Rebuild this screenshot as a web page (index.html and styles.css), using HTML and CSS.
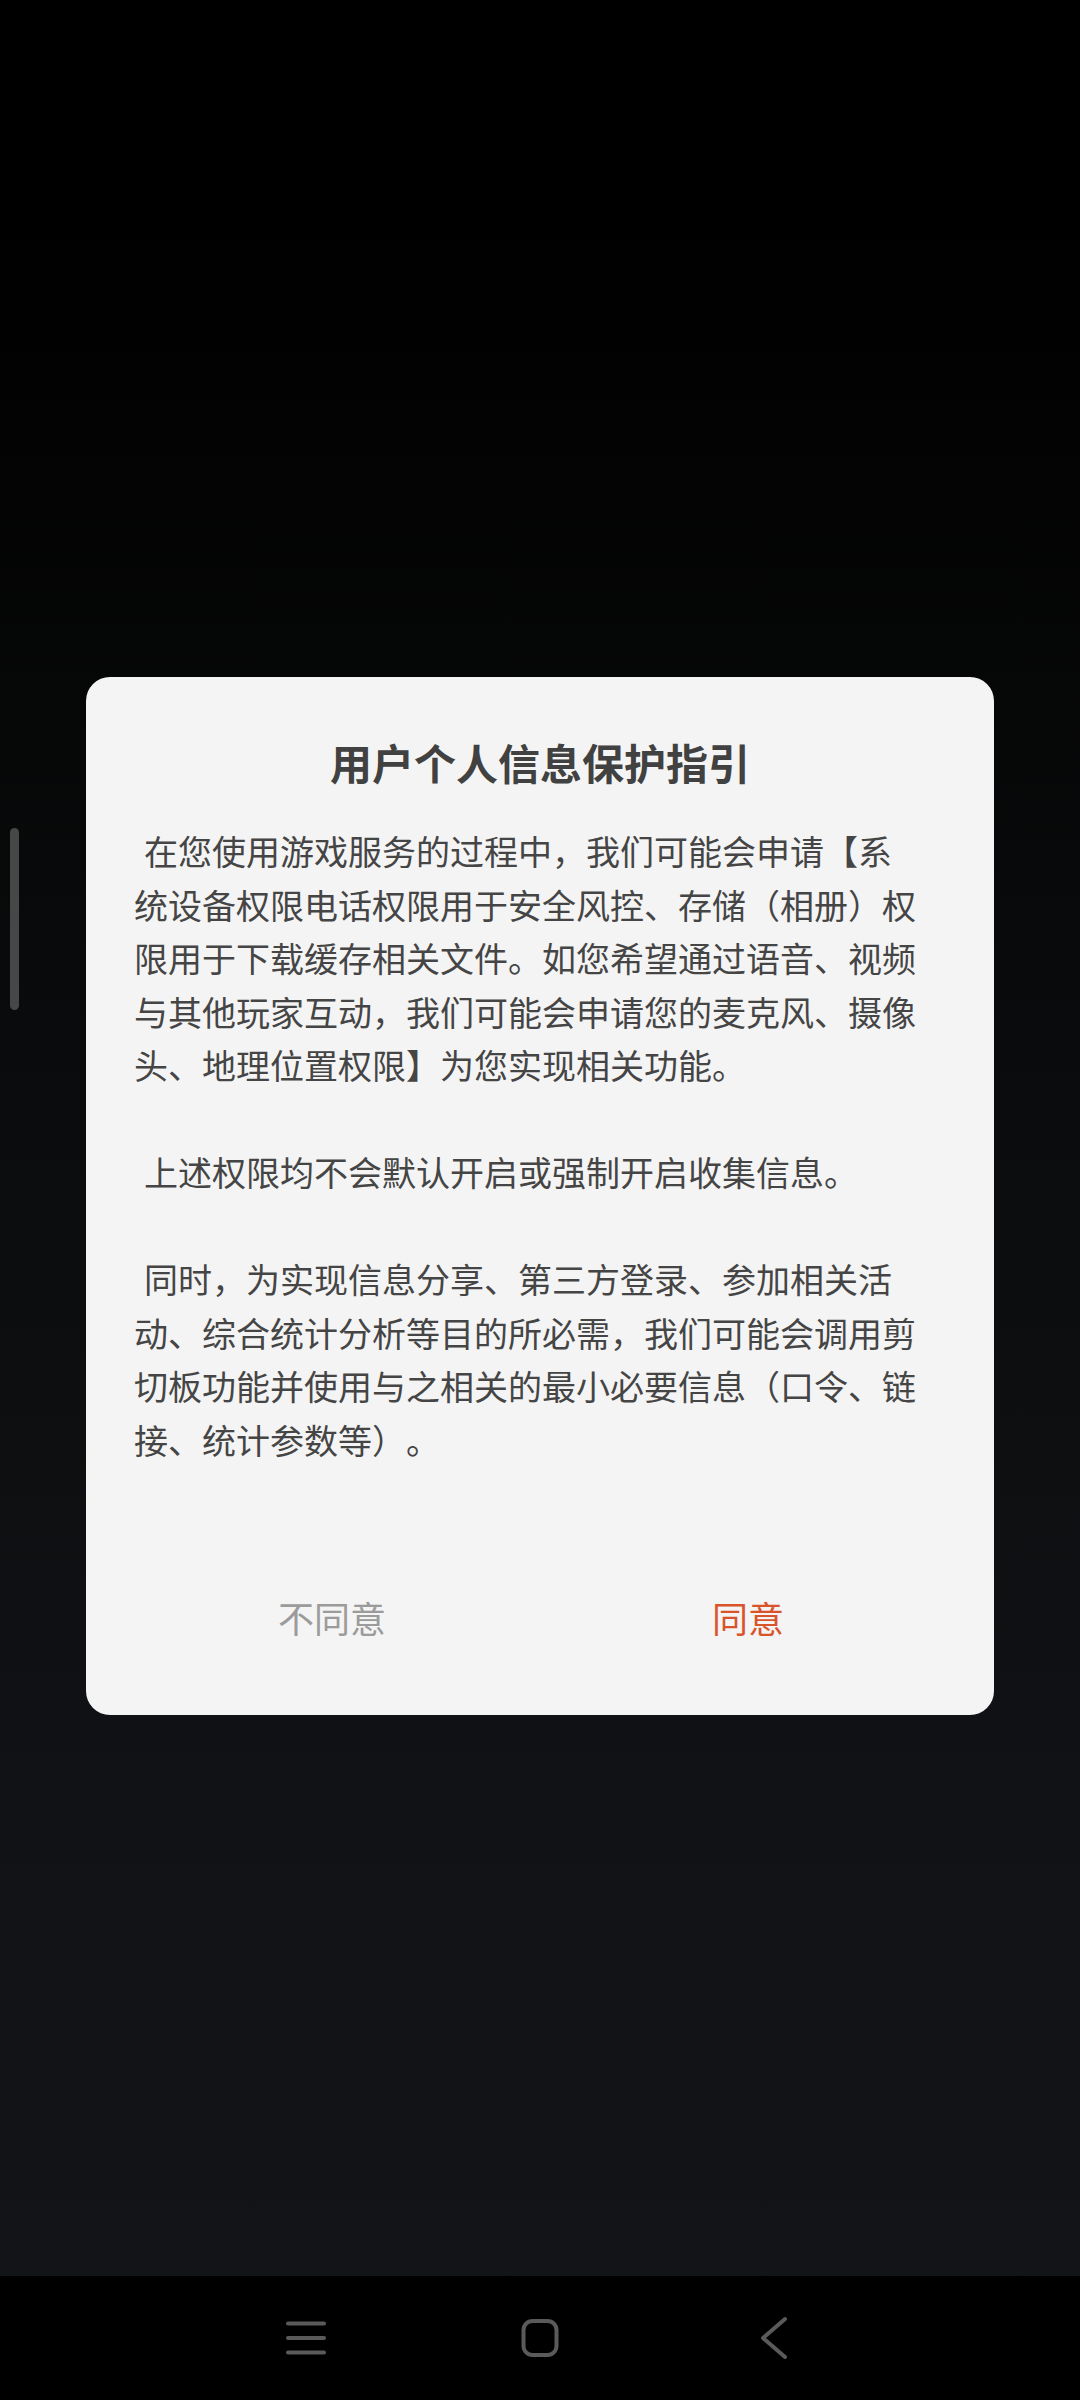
FILE: index.html
```html
<!DOCTYPE html>
<html lang="zh-CN">
<head>
    <meta charset="UTF-8">
    <meta name="viewport" content="width=device-width, initial-scale=1.0">
    <title>用户个人信息保护指引</title>
    <link rel="stylesheet" href="styles.css">
</head>
<body>
    <div class="screen">
        <div class="scroll-thumb"></div>

        <div class="dialog">
            <h1 class="dialog-title">用户个人信息保护指引</h1>
            <div class="dialog-body">
                <p>在您使用游戏服务的过程中，我们可能会申请【系<br>统设备权限电话权限用于安全风控、存储（相册）权<br>限用于下载缓存相关文件。如您希望通过语音、视频<br>与其他玩家互动，我们可能会申请您的麦克风、摄像<br>头、地理位置权限】为您实现相关功能。</p>
                <p>上述权限均不会默认开启或强制开启收集信息。</p>
                <p>同时，为实现信息分享、第三方登录、参加相关活<br>动、综合统计分析等目的所必需，我们可能会调用剪<br>切板功能并使用与之相关的最小必要信息（口令、链<br>接、统计参数等）。</p>
            </div>
            <div class="dialog-actions">
                <button class="btn btn-decline">不同意</button>
                <button class="btn btn-accept">同意</button>
            </div>
        </div>
    </div>

    <nav class="nav-bar">
        <svg viewBox="0 0 60 60" fill="none" stroke="currentColor" stroke-width="4" stroke-linecap="round">
            <line x1="12" y1="15.5" x2="48" y2="15.5"></line>
            <line x1="12" y1="30" x2="48" y2="30"></line>
            <line x1="12" y1="44.5" x2="48" y2="44.5"></line>
        </svg>
        <svg viewBox="0 0 60 60" fill="none" stroke="currentColor" stroke-width="4">
            <rect x="13.5" y="13" width="33" height="34" rx="9"></rect>
        </svg>
        <svg viewBox="0 0 60 60" fill="none" stroke="currentColor" stroke-width="4" stroke-linecap="round" stroke-linejoin="round">
            <polyline points="41,11 19,30 41,49"></polyline>
        </svg>
    </nav>
</body>
</html>
```

FILE: styles.css
```css
/* General */
* {
    box-sizing: border-box;
    margin: 0;
    padding: 0;
}

body {
    width: 1080px;
    height: 2400px;
    font-family: "Noto Sans CJK SC", "Noto Sans", sans-serif;
    background-color: #000;
    display: flex;
    flex-direction: column;
    overflow: hidden;
    text-spacing-trim: space-all;
}

/* Screen behind the dialog */
.screen {
    position: relative;
    flex: 1;
    padding: 677px 86px 0;
    background: linear-gradient(180deg, #000 0%, #000 10%, #0a0b0c 45%, #101215 80%, #131417 100%);
}

.scroll-thumb {
    position: absolute;
    left: 10px;
    top: 828px;
    width: 9px;
    height: 182px;
    border-radius: 5px;
    background-color: #474747;
}

/* Dialog */
.dialog {
    background-color: #f4f4f4;
    border-radius: 24px;
    padding: 55px 0 38px;
}

.dialog-title {
    font-size: 42px;
    font-weight: 700;
    line-height: 60px;
    text-align: center;
    color: #414141;
}

.dialog-body {
    margin-top: 32px;
    padding: 0 40px 0 48px;
    font-size: 34px;
    line-height: 53.5px;
    color: #454545;
    white-space: nowrap;
}

.dialog-body p {
    text-indent: 10px;
}

.dialog-body p + p {
    margin-top: 53.5px;
}

.dialog-actions {
    display: flex;
    margin-top: 91px;
    padding: 0 38px;
    height: 120px;
}

.btn {
    flex: 1;
    background: transparent;
    border: none;
    font-family: inherit;
    font-size: 36px;
    cursor: pointer;
}

.btn-decline {
    color: #9b9b9b;
}

.btn-accept {
    color: #d9542b;
}

/* Navigation bar */
.nav-bar {
    height: 124px;
    background-color: #000;
    display: flex;
    justify-content: center;
    align-items: center;
    gap: 174px;
    color: #5a5a5a;
}

.nav-bar svg {
    width: 60px;
    height: 60px;
}
```
